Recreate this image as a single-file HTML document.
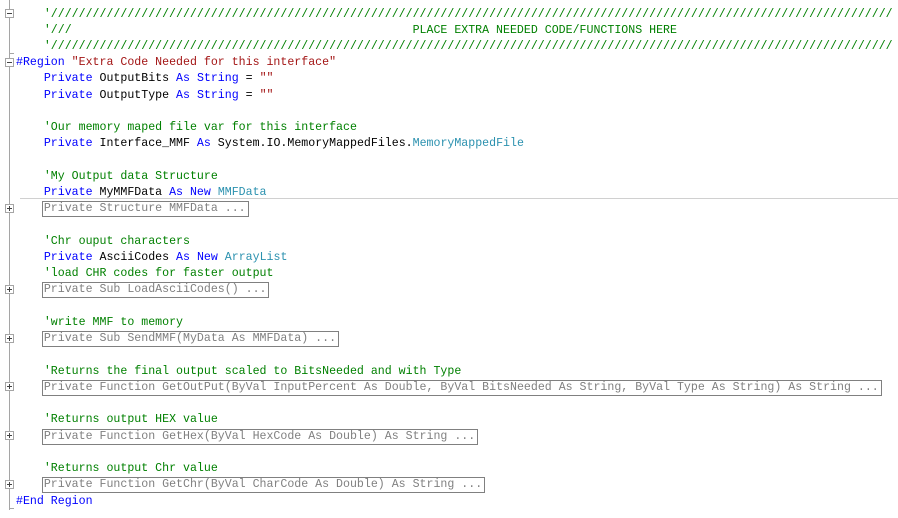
<!DOCTYPE html>
<html><head><meta charset="utf-8"><style>
body{margin:0;width:898px;height:518px;background:#fff;overflow:hidden;position:relative;font-family:"Liberation Mono",monospace;font-size:11.6px}
.code{position:absolute;left:16px;top:6.5px;white-space:pre;line-height:16.23px;color:#000}
.k{color:#0000ff}.t{color:#2b91af}.c{color:#008000}.s{color:#a31515}
.b{color:#808080;outline:1px solid #808080;outline-offset:0;padding:0 2px 1px 1px;margin-left:-1px}
.vl{position:absolute;left:9px;top:0;width:1px;height:510px;background:#a5a5a5}
.box{position:absolute;left:5px;width:7px;height:7px;border:1px solid #a5a5a5;background:#fff}
.box:before{content:"";position:absolute;left:1px;top:3px;width:5px;height:1px;background:#444}
.p:after{content:"";position:absolute;left:3px;top:1px;width:1px;height:5px;background:#444}
.sep{position:absolute;left:20px;right:0;top:198px;height:1px;background:#d0d0d0}
.tk{position:absolute;left:9px;width:5px;height:1px;background:#a5a5a5}
</style></head><body>
<div class="vl"></div>
<div class="tk" style="top:53px"></div>
<div class="tk" style="top:508px"></div>
<div class="sep"></div>
<div class="box" style="top:9px"></div>
<div class="box" style="top:58px"></div>
<div class="box p" style="top:204px"></div>
<div class="box p" style="top:285px"></div>
<div class="box p" style="top:334px"></div>
<div class="box p" style="top:382px"></div>
<div class="box p" style="top:431px"></div>
<div class="box p" style="top:480px"></div>
<div class="code"><span class="c">    '/////////////////////////////////////////////////////////////////////////////////////////////////////////////////////////</span>
<span class="c">    '///                                                 PLACE EXTRA NEEDED CODE/FUNCTIONS HERE</span>
<span class="c">    '/////////////////////////////////////////////////////////////////////////////////////////////////////////////////////////</span>
<span class="k">#Region</span> <span class="s">"Extra Code Needed for this interface"</span>
    <span class="k">Private</span> OutputBits <span class="k">As</span> <span class="k">String</span> = <span class="s">""</span>
    <span class="k">Private</span> OutputType <span class="k">As</span> <span class="k">String</span> = <span class="s">""</span>

    <span class="c">'Our memory maped file var for this interface</span>
    <span class="k">Private</span> Interface_MMF <span class="k">As</span> System.IO.MemoryMappedFiles.<span class="t">MemoryMappedFile</span>

    <span class="c">'My Output data Structure</span>
    <span class="k">Private</span> MyMMFData <span class="k">As</span> <span class="k">New</span> <span class="t">MMFData</span>
    <span class="b">Private Structure MMFData ...</span>

    <span class="c">'Chr ouput characters</span>
    <span class="k">Private</span> AsciiCodes <span class="k">As</span> <span class="k">New</span> <span class="t">ArrayList</span>
    <span class="c">'load CHR codes for faster output</span>
    <span class="b">Private Sub LoadAsciiCodes() ...</span>

    <span class="c">'write MMF to memory</span>
    <span class="b">Private Sub SendMMF(MyData As MMFData) ...</span>

    <span class="c">'Returns the final output scaled to BitsNeeded and with Type</span>
    <span class="b">Private Function GetOutPut(ByVal InputPercent As Double, ByVal BitsNeeded As String, ByVal Type As String) As String ...</span>

    <span class="c">'Returns output HEX value</span>
    <span class="b">Private Function GetHex(ByVal HexCode As Double) As String ...</span>

    <span class="c">'Returns output Chr value</span>
    <span class="b">Private Function GetChr(ByVal CharCode As Double) As String ...</span>
<span class="k">#End Region</span></div>
</body></html>
